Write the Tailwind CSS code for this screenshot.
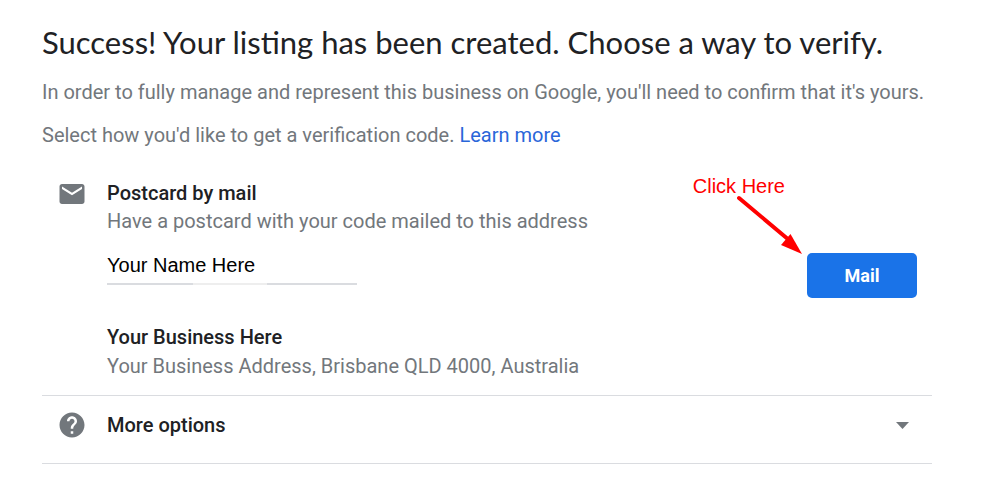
<!DOCTYPE html>
<html lang="en">
<head>
    <meta charset="UTF-8">
    <meta name="viewport" content="width=device-width, initial-scale=1.0">
    <title>Choose a way to verify</title>
    <script src="https://cdn.jsdelivr.net/npm/@tailwindcss/browser@4"></script>
</head>
<body class="bg-white font-[Roboto,sans-serif] text-xl leading-7 text-[#202124]">

    <main class="pt-[22px] pl-[42px] pr-[50px]">
        <!-- Page heading -->
        <header>
            <h1 class="font-[Lato,sans-serif] text-[31px] leading-10 whitespace-nowrap">Success! Your listing has been created. Choose a way to verify.</h1>
            <p class="mt-4 whitespace-nowrap text-[#72777c]">In order to fully manage and represent this business on Google, you'll need to confirm that it's yours.</p>
            <p class="mt-[15px] text-[#72777c]">Select how you'd like to get a verification code. <a href="#" class="text-[#2a66d9]">Learn more</a></p>
        </header>

        <!-- Postcard option -->
        <section class="mt-[30px] flex border-b border-[#dadce0] pb-[15px]">
            <div class="w-[65px] shrink-0 pl-[15px]">
                <svg class="size-[30px]" viewBox="0 0 24 24" fill="#72777c" aria-hidden="true">
                    <path d="M20 4H4c-1.1 0-1.99.9-1.99 2L2 18c0 1.1.9 2 2 2h16c1.1 0 2-.9 2-2V6c0-1.1-.9-2-2-2zm0 4l-8 5-8-5V6l8 5 8-5v2z"/>
                </svg>
            </div>
            <div class="flex-1">
                <h2 class="font-medium">Postcard by mail</h2>
                <p class="text-[#72777c]">Have a postcard with your code mailed to this address</p>

                <form class="mt-3 flex items-start justify-between pr-[15px]">
                    <div class="w-[250px]">
                        <input type="text" value="Your Name Here" aria-label="Contact name" class="block h-9 w-full font-['Liberation_Sans',sans-serif] text-xl text-black outline-none">
                        <div class="flex h-[2px] bg-[#dadce0]">
                            <span class="ml-[86px] w-[74px] bg-[#eeeeee]"></span>
                        </div>
                    </div>
                    <div class="relative pt-[6px]">
                        <button type="button" class="block h-[45px] w-[110px] rounded-[5px] bg-[#1a73e8] text-lg font-bold text-white">Mail</button>
                        <!-- Pointer to the button -->
                        <div class="absolute -top-[75px] right-[132px] font-['Liberation_Sans',sans-serif] whitespace-nowrap text-[#ff0000]">Click Here</div>
                        <svg class="absolute -top-[53px] right-[114px] h-[62px] w-[68px]" viewBox="0 0 68 62" aria-hidden="true">
                            <path d="M4 4 L54 46" stroke="#ff0000" stroke-width="4" stroke-linecap="round"/>
                            <path d="M67 60 L46 51 L55.500 40 Z" fill="#ff0000"/>
                        </svg>
                    </div>
                </form>

                <h3 class="mt-[25px] font-medium">Your Business Here</h3>
                <p class="mt-px text-[#72777c]">Your Business Address, Brisbane QLD 4000, Australia</p>
            </div>
        </section>

        <!-- More options -->
        <button type="button" class="flex w-full items-center border-b border-[#dadce0] pt-[14px] pb-[23px] text-left">
            <span class="w-[65px] shrink-0 pl-[15px]">
                <svg class="size-[30px]" viewBox="0 0 24 24" fill="#72777c" aria-hidden="true">
                    <path d="M12 2C6.480 2 2 6.480 2 12s4.480 10 10 10 10-4.480 10-10S17.520 2 12 2zm1 17h-2v-2h2v2zm2.070-7.750l-.9.920C13.450 12.900 13 13.500 13 15h-2v-.5c0-1.100.450-2.100 1.170-2.830l1.240-1.260c.370-.360.590-.860.590-1.410 0-1.100-.9-2-2-2s-2 .9-2 2H8c0-2.210 1.790-4 4-4s4 1.790 4 4c0 .880-.360 1.680-.930 2.250z"/>
                </svg>
            </span>
            <span class="flex-1 font-medium">More options</span>
            <svg class="mr-[23px] h-[7px] w-[13px]" viewBox="0 0 13 7" fill="#72777c" aria-hidden="true">
                <path d="M0 0h13L6.500 7z"/>
            </svg>
        </button>
    </main>

</body>
</html>
